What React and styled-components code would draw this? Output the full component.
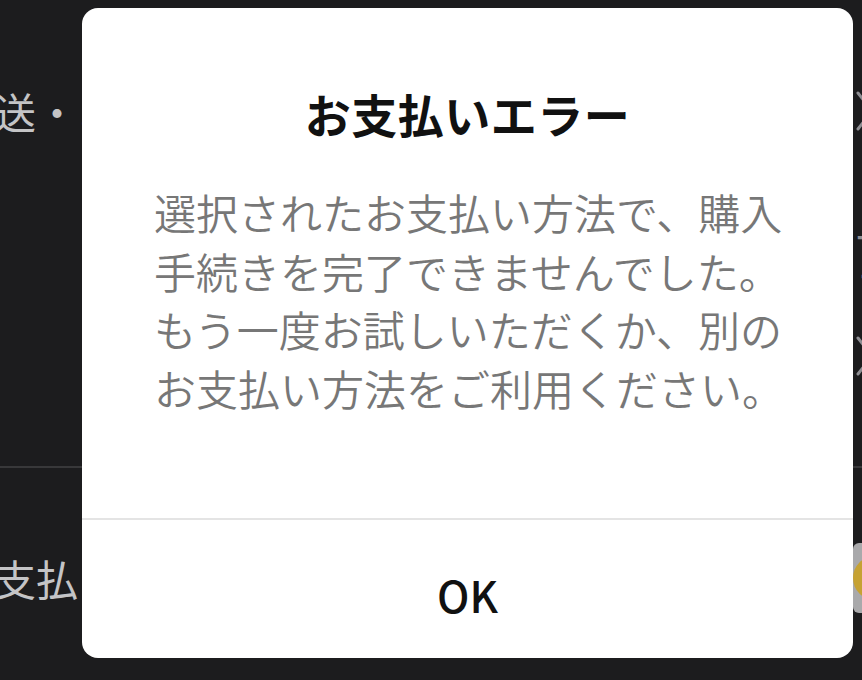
import React from "react";
import styled, { createGlobalStyle } from "styled-components";

const Global = createGlobalStyle`
  html, body { margin: 0; padding: 0; background: #1c1c1e; }
  body { font-family: "Noto Sans CJK JP", "Noto Sans", sans-serif; }
`;

const Screen = styled.div`
  position: relative;
  width: 862px;
  height: 680px;
  background: #1c1c1e;
  overflow: hidden;
`;

const BgList = styled.div`
  display: flex;
  flex-direction: column;
  width: 862px;
`;

const Section = styled.div`
  display: flex;
  flex-direction: column;
  height: ${(p) => p.$h}px;
`;

const Row = styled.div`
  display: flex;
  align-items: center;
  justify-content: space-between;
  height: ${(p) => p.$h}px;
  margin-top: ${(p) => p.$top || 0}px;
`;

const Label = styled.span`
  margin-left: -48px;
  font-size: 42px;
  line-height: 1;
  color: #c4c4c6;
  white-space: nowrap;
`;

const Chevron = styled.svg`
  width: 22px;
  height: 44px;
  margin-right: -14px;
  flex: none;
`;

const SideText = styled.div`
  display: flex;
  flex-direction: column;
  gap: 6px;
  margin-right: -34px;
  font-size: 40px;
  line-height: 44px;
  color: #8e8e93;
`;

const Divider = styled.div`
  height: 2px;
  background: #38383a;
`;

const CardChip = styled.div`
  position: relative;
  width: 60px;
  height: 70px;
  margin-right: -51px;
  border-radius: 6px;
  background: #a9a9ab;
  flex: none;
`;

const CardDot = styled.div`
  position: absolute;
  left: 0;
  top: 13px;
  width: 44px;
  height: 44px;
  border-radius: 50%;
  background: #c6a233;
`;

const Modal = styled.div`
  position: absolute;
  left: 82px;
  top: 8px;
  width: 771px;
  height: 650px;
  background: #ffffff;
  border-radius: 16px;
  display: flex;
  flex-direction: column;
  overflow: hidden;
`;

const Content = styled.div`
  flex: 1;
  display: flex;
  flex-direction: column;
  align-items: center;
  padding-top: 78px;
`;

const Title = styled.h2`
  margin: 0;
  font-size: 46px;
  line-height: 55px;
  font-weight: 700;
  color: #111111;
  letter-spacing: 0.5px;
`;

const Body = styled.div`
  margin-top: 42px;
  font-size: 42px;
  line-height: 58.7px;
  font-weight: 350;
  color: #777777;
  text-align: left;
  padding-left: 3px;
`;

const Line = styled.div`
  white-space: nowrap;
`;

const FooterRule = styled.div`
  height: 2px;
  background: #e4e4e4;
  flex: none;
`;

const OkButton = styled.button`
  flex: none;
  height: 138px;
  border: none;
  background: transparent;
  display: flex;
  align-items: center;
  justify-content: center;
  padding: 10px 0 0 0;
  font-family: "Noto Sans CJK JP", "Noto Sans", sans-serif;
  font-size: 43px;
  font-weight: 500;
  color: #111111;
  cursor: pointer;
`;

const chevron = (
  <Chevron viewBox="0 0 22 44">
    <path d="M4 4 L18 22 L4 40" fill="none" stroke="#8e8e93" strokeWidth="3" strokeLinecap="round" strokeLinejoin="round" />
  </Chevron>
);

export default function App() {
  const lines = [
    "選択されたお支払い方法で、購入",
    "手続きを完了できませんでした。",
    "もう一度お試しいただくか、別の",
    "お支払い方法をご利用ください。",
  ];
  return (
    <>
      <Global />
      <Screen>
        <BgList>
          <Section $h={466}>
            <Row $h={80} $top={71}>
              <Label>配送・お届け先</Label>
              {chevron}
            </Row>
            <Row $h={100} $top={60}>
              <span />
              <SideText>
                <span>一</span>
                <span>フ</span>
              </SideText>
            </Row>
            <Row $h={60} $top={15}>
              <span />
              {chevron}
            </Row>
          </Section>
          <Divider />
          <Row $h={80} $top={70}>
            <Label>お支払い方法</Label>
            <CardChip>
              <CardDot />
            </CardChip>
          </Row>
        </BgList>
        <Modal role="alertdialog" aria-labelledby="err-title">
          <Content>
            <Title id="err-title">お支払いエラー</Title>
            <Body>
              {lines.map((l) => (
                <Line key={l}>{l}</Line>
              ))}
            </Body>
          </Content>
          <FooterRule />
          <OkButton>OK</OkButton>
        </Modal>
      </Screen>
    </>
  );
}
